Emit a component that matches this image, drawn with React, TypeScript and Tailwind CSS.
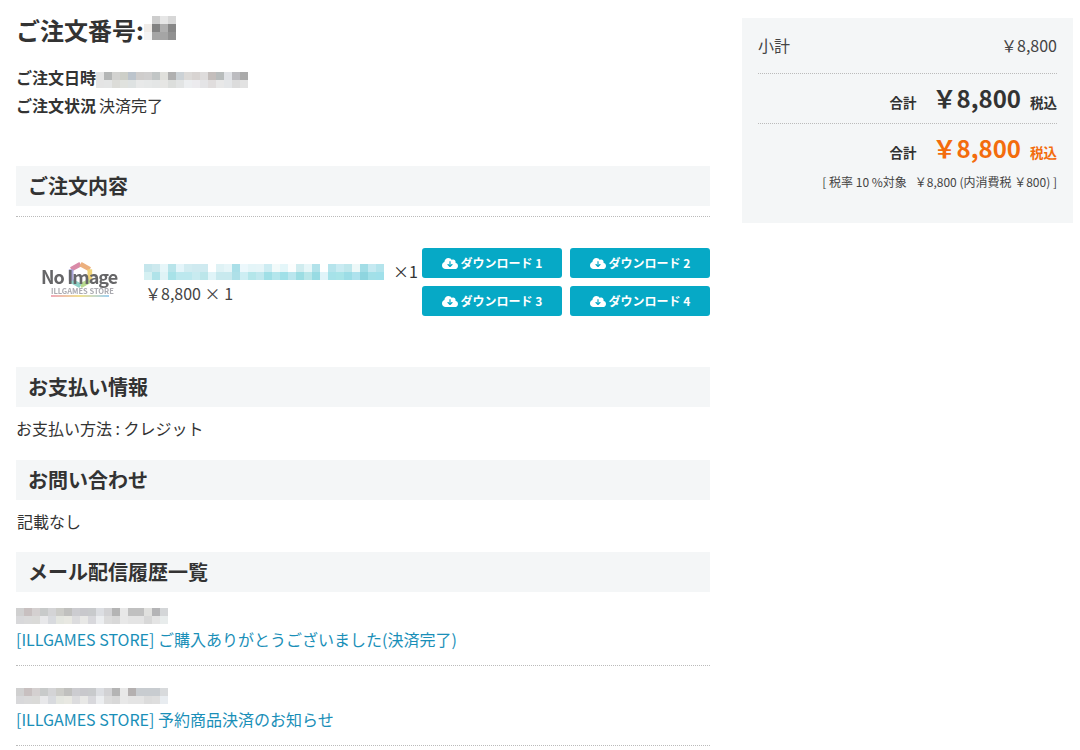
const jp = "font-['Noto_Sans_CJK_JP','Noto_Sans',sans-serif]"

const Mosaic = ({ rows, className = '' }: { rows: string[]; className?: string }) => (
    <span className={`flex w-fit shrink-0 flex-col ${className}`}>
        {rows.map((row, i) => (
            <span key={i} className="flex">
                {row.split(' ').map((c, j) => (
                    <span key={j} className="h-2 w-2" style={{ background: `#${c}` }} />
                ))}
            </span>
        ))}
    </span>
)

const SectionTitle = ({ children }: { children: string }) => (
    <h2 className="h-10 bg-[#f4f6f7] pl-3 text-[20px] leading-10 font-bold text-[#333]">{children}</h2>
)

const CloudIcon = () => (
    <svg width="16" height="13" viewBox="0 0 640 512" fill="#fff">
        <path d="M144 480C64.500 480 0 415.500 0 336c0-62.800 40.200-116.200 96.200-135.900-.1-2.700-.2-5.400-.2-8.100 0-88.400 71.600-160 160-160 59.300 0 111 32.200 138.700 80.200C409.900 102 428.300 96 448 96c53 0 96 43 96 96 0 12.200-2.300 23.800-6.400 34.600C596 238.400 640 290.100 640 352c0 70.700-57.300 128-128 128H144zm79-167l80 80c9.400 9.400 24.600 9.400 33.900 0l80-80c9.400-9.400 9.400-24.600 0-33.900s-24.600-9.400-33.900 0l-39 39V184c0-13.300-10.700-24-24-24s-24 10.700-24 24v134.100l-39-39c-9.400-9.400-24.600-9.400-33.900 0s-9.400 24.600 0 33.900z" />
    </svg>
)

const DownloadButton = ({ n }: { n: number }) => (
    <a className="flex h-[30px] w-[140px] items-center justify-center gap-[3px] rounded-[3px] bg-[#06a9c6] text-xs font-bold text-white">
        <CloudIcon />
        <span>ダウンロード {n}</span>
    </a>
)

// placeholder logo, hexagon ring sits behind the words
const NoImage = () => (
    <div className="relative h-[40px] w-[76px]">
        <svg className="absolute top-[-1px] left-[26px]" width="25" height="28" viewBox="0 0 24 27" fill="none" strokeWidth="4.500">
            <path d="M3 8 L12 3" stroke="#d98aa8" />
            <path d="M12 3 L21 8" stroke="#ecb07e" />
            <path d="M21 8 L21 19" stroke="#f0d478" />
            <path d="M21 19 L12 24" stroke="#b8da90" />
            <path d="M12 24 L3 19" stroke="#8fd2c8" />
            <path d="M3 19 L3 8" stroke="#a8a4d8" />
        </svg>
        <span className="absolute top-[4px] left-[-1px] text-[18px] leading-[20px] font-bold tracking-[-0.9px] whitespace-nowrap text-[#666668] blur-[0.3px]">
            No Image
        </span>
        <div className="absolute top-[24px] left-[9px] w-[58px] text-center text-[7.500px] leading-[9px] font-bold whitespace-nowrap text-[#aaaab0] blur-[0.3px]">
            ILLGAMES STORE
        </div>
        <div className="absolute top-[33px] left-[9px] h-[1.500px] w-[58px] bg-gradient-to-r from-[#eeaabb] via-[#f0e090] to-[#a0d0f0]" />
    </div>
)

const Dotted = () => <div className="border-b border-dotted border-[#bbb]" />

const Total = ({ orange }: { orange?: boolean }) => (
    <div className="flex h-[49px] items-baseline justify-end pt-[6px] font-bold">
        <span className="mr-[16px] text-[13.500px]">合計</span>
        <span className={`mr-[9px] text-[24px] ${orange ? 'text-[#f36c0d]' : ''}`}>￥8,800</span>
        <span className={`text-[13.500px] ${orange ? 'text-[#f36c0d]' : ''}`}>税込</span>
    </div>
)

const orderNo = [
    'ffffff cdcdcd e6e6e6 d7d7d7',
    'f0ece8 828282 afafaf 878787',
    'f4f4f4 a5a5a5 a5a5a5 919191',
]
const orderDate = [
    'e5e5e5 b4b6b6 d2d2d0 cdcfc8 bcc4cc cfcdcc d0cfcf c2c6c6 e0e0dc b0b0b0 ccd2d6 dcdad8 d8d4d2 dedcdc c4bebc b8bcbc e0e2e6 bcbcc0 aaaaaa',
    'e4e4e4 e4e5e5 dcdcd8 e0e2de dee2e2 e8e9e9 e6e8e8 e4e6e6 e6e6e4 dcdedc e2e4e4 eceef0 ecebee e4e4e6 e0dddd e8e8e8 e4e6e8 dcdcdc e2e2e2',
]
const itemName = [
    'c5e6ec cde9ee e6f6f9 b8e4ea e4f5fa d2ecf1 cfeaf0 cfeaf0 ffffff dff2f5 e6f5f8 aadfe8 ecf8fc e4f5f8 e6f5f8 cdecf2 f2fafa e4f6f9 fbfdfd d0ecef e6f6f8 b2e2ea ffffff b6e4ec c9ebf2 bfe7ec edf8f8 a2dde6 c5e9f1 b4e4ec',
    'd5f0f2 b0e3e9 dff3f6 a8e2e8 bce8ee bce8ee c8ebf0 bce6ea e0f4f8 c8e9ee c8e9ee aee0e8 cdeef3 b4e6ea c0e8ee a0dfe6 b4e6ec a0e0e8 bae6ee 9cdde3 b8e6e9 98dbe3 e0f4f9 a6e2e9 a8e4e8 9cdde6 aee2ed 8ed5df a2e0e8 a0e0ea',
]
const mailDate1 = [
    'd0d0d0 c8c0c0 d4d0d0 c8caca d4d4d6 ccccc8 c0c0be ccccd0 c8c8cc c8cacc dcdee2 d2d2d4 b4b4b4 e8e8e8 c0c0c0 c0c0c0 e0e0de b4b4b6 d4d6d8',
    'd8d8da dadada dadad8 e8e8ea d8dade e4e6e0 e8e8e2 dcdcde e8e8e6 d8d8dc eceef0 dcdcdc d8d8d8 e8e8e8 e4e4e4 e4e4e4 d8d8d8 e4e4e4 e8ecec',
]
const mailDate2 = [
    'd0d0d0 c8c0c0 d4d0d0 c8caca d4d4d6 ccccc8 c0c0be ccccd0 c8c8cc c8cacc dcdee2 d2d2d4 b4b4b4 e8e8e8 b4b0b0 c8ccd0 c8ccd0 c8ccd0 d8dadc',
    'd8d8da dadada dadad8 e8e8ea d8dade e4e6e0 e8e8e2 dcdcde e8e8e6 d8d8dc eceef0 dcdcdc d8d8d8 e8e8e8 e4e4e4 e4e4e4 dcdcdc dedede e8ecf0',
]

export default function App() {
    return (
        <div className={`${jp} flex h-[750px] w-[1080px] gap-8 overflow-hidden bg-white text-[#333]`}>
            <main className="ml-4 w-[694px] shrink-0">
                <h1 className="mt-[13px] flex h-[34px] items-center text-[24px] leading-[34px] font-bold">
                    ご注文番号:
                    <Mosaic rows={orderNo} className="mt-[3px] self-start" />
                </h1>
                <p className="mt-[16px] flex h-[28px] items-center text-[16px] leading-[28px]">
                    <b>ご注文日時</b>
                    <Mosaic rows={orderDate} className="mt-[9px] self-start" />
                </p>
                <p className="flex h-[28px] items-center gap-[3px] text-[16px] leading-[28px]">
                    <b>ご注文状況</b> 決済完了
                </p>
                <section className="mt-[47px]">
                    <SectionTitle>ご注文内容</SectionTitle>
                    <div className="mt-[10px]">
                        <Dotted />
                    </div>
                    <div className="mt-[15px] flex h-[100px] items-center">
                        <div className="flex w-[128px] shrink-0 justify-center">
                            <NoImage />
                        </div>
                        <div className="w-[278px] shrink-0 text-[16px] leading-[22px]">
                            <div className="flex h-[22px] items-center gap-[9px]">
                                <Mosaic rows={itemName} className="mt-[2px]" />
                                <span>×1</span>
                            </div>
                            <div className="h-[22px] pl-[1px] text-[#444]">￥8,800 × 1</div>
                        </div>
                        <div className="grid grid-cols-[140px_140px] gap-2">
                            {[1, 2, 3, 4].map((n) => (
                                <DownloadButton key={n} n={n} />
                            ))}
                        </div>
                    </div>
                </section>
                <section className="mt-[35px]">
                    <SectionTitle>お支払い情報</SectionTitle>
                    <p className="mt-[7px] text-[16px] leading-[28px]">お支払い方法 : クレジット</p>
                </section>
                <section className="mt-[18px]">
                    <SectionTitle>お問い合わせ</SectionTitle>
                    <p className="mt-[7px] pl-[1px] text-[16px] leading-[28px]">記載なし</p>
                </section>
                <section className="mt-[17px]">
                    <SectionTitle>メール配信履歴一覧</SectionTitle>
                    <Mosaic rows={mailDate1} className="mt-[16px]" />
                    <a className="block h-[30px] text-[16px] leading-[30px] text-[#1a8fb8]">
                        [ILLGAMES STORE] ご購入ありがとうございました(決済完了)
                    </a>
                    <div className="mt-[11px]">
                        <Dotted />
                    </div>
                    <Mosaic rows={mailDate2} className="mt-[22px]" />
                    <a className="block h-[30px] text-[16px] leading-[30px] text-[#1a8fb8]">
                        [ILLGAMES STORE] 予約商品決済のお知らせ
                    </a>
                    <div className="mt-[11px]">
                        <Dotted />
                    </div>
                </section>
            </main>
            <aside className="mt-[18px] h-[205px] w-[331px] shrink-0 bg-[#f4f6f7] px-4">
                <div className="flex h-[55px] items-center justify-between pb-[2px] text-[16px] text-[#444]">
                    <span>小計</span>
                    <span>￥8,800</span>
                </div>
                <Dotted />
                <Total />
                <Dotted />
                <Total orange />
                <p className="flex justify-end text-[12px] text-[#444]">
                    <span>[ 税率 10 %対象</span>
                    <span className="w-[8px]" />
                    <span>￥8,800 (内消費税 ￥800) ]</span>
                </p>
            </aside>
        </div>
    )
}
